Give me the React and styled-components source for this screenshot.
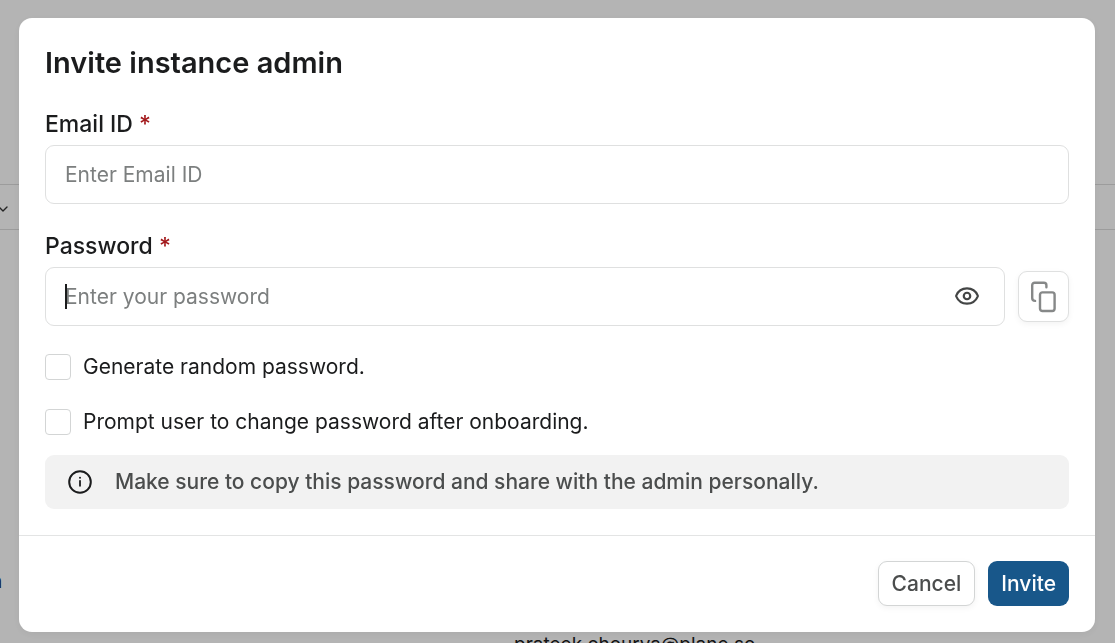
import { useState } from "react";
import styled, { createGlobalStyle } from "styled-components";
import { ChevronDown, Eye, EyeOff } from "lucide-react";

const CopyIcon = () => (
  <svg
    width="28"
    height="32"
    viewBox="0 0 28 32"
    fill="none"
    stroke="currentColor"
    strokeWidth="2.4"
    strokeLinecap="round"
    aria-hidden="true"
  >
    <path d="M16.4 6.2V4.2A2.5 2.5 0 0 0 13.9 1.7H4.7A2.5 2.5 0 0 0 2.2 4.2V17A2.9 2.9 0 0 0 5.1 19.9" />
    <rect x="10" y="11.4" width="14.6" height="18.6" rx="2.4" />
  </svg>
);

const InfoIcon = () => (
  <svg width="24" height="24" viewBox="0 0 24 24" fill="none" aria-hidden="true">
    <circle cx="12" cy="12" r="10.8" stroke="currentColor" strokeWidth="2" />
    <path d="M12 10.8V15.8" stroke="currentColor" strokeWidth="1.8" strokeLinecap="round" />
    <circle cx="12" cy="7.8" r="1" fill="currentColor" />
  </svg>
);

const App = () => {
  const [email, setEmail] = useState("");
  const [password, setPassword] = useState("");
  const [visible, setVisible] = useState(true);
  const [random, setRandom] = useState(false);
  const [prompt, setPrompt] = useState(false);

  const handleSubmit = (e) => {
    e.preventDefault();
  };

  const copyPassword = () => {
    navigator.clipboard?.writeText(password);
  };

  return (
    <>
      <GlobalStyle />
      <Page>
        <Toolbar>
          <ChevronDown size={16} />
        </Toolbar>
        <Users>
          <Role>Admin</Role>
          <UserEmail>prateek.chourya@plane.so</UserEmail>
        </Users>
      </Page>
      <Overlay>
        <Modal
          role="dialog"
          aria-modal="true"
          aria-labelledby="invite-title"
          onSubmit={handleSubmit}
        >
          <Body>
            <Title id="invite-title">Invite instance admin</Title>
            <Field>
              <Label htmlFor="email">
                Email ID <Required>*</Required>
              </Label>
              <Input
                id="email"
                type="email"
                placeholder="Enter Email ID"
                value={email}
                onChange={(e) => setEmail(e.target.value)}
              />
            </Field>
            <Field>
              <Label htmlFor="password">
                Password <Required>*</Required>
              </Label>
              <PasswordRow>
                <PasswordBox $empty={!password}>
                  <Input
                    id="password"
                    type={visible ? "text" : "password"}
                    placeholder="Enter your password"
                    value={password}
                    onChange={(e) => setPassword(e.target.value)}
                  />
                  <EyeButton
                    type="button"
                    aria-label="Toggle password visibility"
                    onClick={() => setVisible(!visible)}
                  >
                    {visible ? <Eye size={26} /> : <EyeOff size={26} />}
                  </EyeButton>
                </PasswordBox>
                <CopyButton
                  type="button"
                  aria-label="Copy password"
                  onClick={copyPassword}
                >
                  <CopyIcon />
                </CopyButton>
              </PasswordRow>
            </Field>
            <Options>
              <Option>
                <Checkbox
                  type="checkbox"
                  checked={random}
                  onChange={(e) => setRandom(e.target.checked)}
                />
                Generate random password.
              </Option>
              <Option>
                <Checkbox
                  type="checkbox"
                  checked={prompt}
                  onChange={(e) => setPrompt(e.target.checked)}
                />
                Prompt user to change password after onboarding.
              </Option>
            </Options>
            <Note>
              <InfoIcon />
              <NoteText>
                Make sure to copy this password and share with the admin
                personally.
              </NoteText>
            </Note>
          </Body>
          <Footer>
            <Button type="button">Cancel</Button>
            <Button type="submit" $primary>
              Invite
            </Button>
          </Footer>
        </Modal>
      </Overlay>
    </>
  );
};

export default App;

const GlobalStyle = createGlobalStyle`
  * {
    box-sizing: border-box;
  }
  body {
    margin: 0;
    background: #ffffff;
    color: #1b1c1d;
    font-family: Inter, "Liberation Sans", sans-serif;
    font-optical-sizing: none;
    overflow: hidden;
  }
  button,
  input {
    font: inherit;
  }
`;

const Page = styled.div`
  height: 100vh;
  padding-top: 184px;
  overflow: hidden;
`;
const Toolbar = styled.div`
  display: flex;
  align-items: center;
  height: 46px;
  margin-left: -5px;
  padding-top: 3px;
  border-top: 1px solid #dddddd;
  border-bottom: 1px solid #dddddd;
  color: #333333;
`;
const Users = styled.div`
  display: flex;
  flex-direction: column;
  gap: 35px;
  padding-top: 338px;
  font-size: 19px;
  line-height: 28px;
`;
const Role = styled.span`
  margin-left: -55px;
`;
const UserEmail = styled.span`
  margin-left: 514px;
`;
const Overlay = styled.div`
  position: fixed;
  inset: 0;
  padding: 18px 20px 11px 19px;
  background: rgba(0, 0, 0, 0.295);
`;
const Modal = styled.form`
  background: #ffffff;
  border-radius: 13px;
  box-shadow: 0 2px 8px rgba(0, 0, 0, 0.06);
`;
const Body = styled.div`
  padding: 26px;
`;
const Title = styled.h2`
  margin: 0;
  font-size: 29px;
  font-weight: 600;
  line-height: 38px;
`;
const Field = styled.div`
  display: flex;
  flex-direction: column;
  gap: 6px;
  margin-top: 27px;
`;
const Label = styled.label`
  font-size: 23px;
  font-weight: 500;
  line-height: 30px;
`;
const Required = styled.span`
  color: #a3191c;
`;
const Input = styled.input`
  width: 100%;
  height: 59px;
  padding: 0 19px;
  border: 1px solid #dfe0e0;
  border-radius: 9px;
  background: #ffffff;
  color: #1b1c1d;
  font-size: 21px;
  outline: none;
  &::placeholder {
    color: #7c7f7f;
    opacity: 1;
  }
`;
const PasswordRow = styled.div`
  display: flex;
  align-items: center;
  gap: 13px;
`;
const PasswordBox = styled.div`
  position: relative;
  flex: 1;
  &::before {
    content: "";
    display: ${({ $empty }) => ($empty ? "block" : "none")};
    position: absolute;
    top: 17px;
    left: 20px;
    width: 2px;
    height: 25px;
    background: #1b1c1d;
  }
`;
const EyeButton = styled.button`
  position: absolute;
  top: 16px;
  right: 25px;
  display: flex;
  padding: 0;
  border: 0;
  background: none;
  color: #434545;
  cursor: pointer;
`;
const CopyButton = styled.button`
  display: flex;
  align-items: center;
  justify-content: center;
  width: 51px;
  height: 51px;
  padding: 0;
  border: 1px solid #dfe0e0;
  border-radius: 9px;
  background: #ffffff;
  box-shadow: 0 2px 6px rgba(0, 0, 0, 0.05);
  color: #868888;
  cursor: pointer;
`;
const Options = styled.div`
  display: flex;
  flex-direction: column;
  gap: 27px;
  margin: 27px 0 19px;
`;
const Option = styled.label`
  display: flex;
  align-items: center;
  gap: 12px;
  font-size: 21px;
  line-height: 28px;
`;
const Checkbox = styled.input`
  appearance: none;
  width: 26px;
  height: 26px;
  margin: 0;
  border: 1px solid #d3d5d5;
  border-radius: 4px;
  background: #ffffff;
  &:checked {
    background: #18578a;
  }
`;
const Note = styled.div`
  display: flex;
  align-items: center;
  gap: 23px;
  padding: 13px 23px;
  border-radius: 9px;
  background: #f2f2f2;
`;
const NoteText = styled.p`
  margin: 0;
  color: #4b4d4d;
  font-size: 21px;
  font-weight: 500;
  line-height: 28px;
`;
const Footer = styled.div`
  display: flex;
  justify-content: flex-end;
  gap: 13px;
  padding: 25px 26px 26px;
  border-top: 1px solid #e3e4e4;
`;
const Button = styled.button`
  height: 45px;
  padding: 0 13px;
  border: ${({ $primary }) => ($primary ? "0" : "1px solid #d3d5d5")};
  border-radius: 9px;
  background: ${({ $primary }) => ($primary ? "#18578a" : "#ffffff")};
  box-shadow: ${({ $primary }) =>
    $primary ? "none" : "0 2px 6px rgba(0, 0, 0, 0.05)"};
  color: ${({ $primary }) => ($primary ? "#ffffff" : "#4b4d4d")};
  font-size: 21px;
  font-weight: 500;
  cursor: pointer;
`;
